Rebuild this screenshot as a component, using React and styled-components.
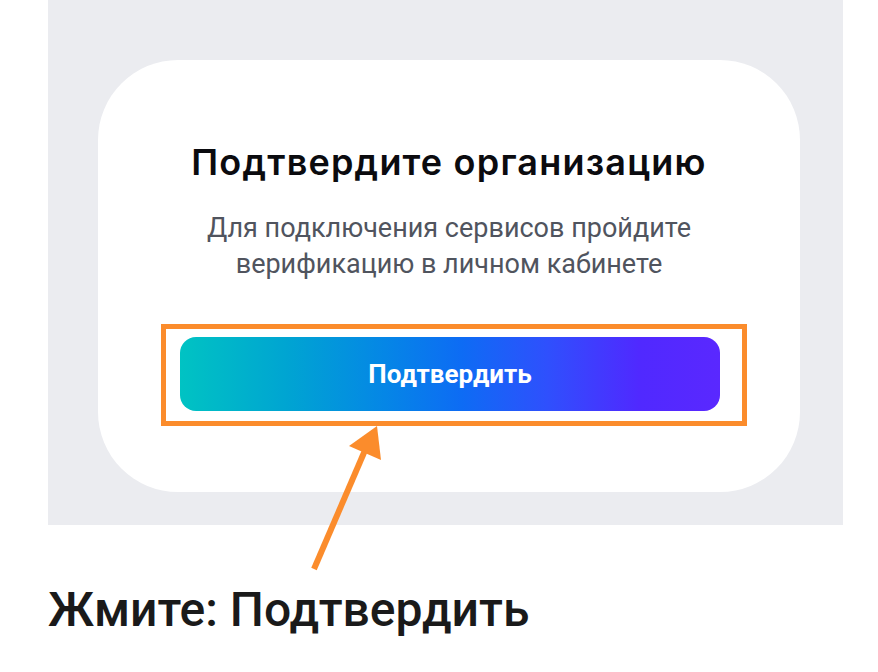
import React from 'react'
import styled, {createGlobalStyle} from 'styled-components'

const GlobalStyle = createGlobalStyle`
    body {
        margin: 0;
        background: #ffffff;
        font-family: Roboto, "Liberation Sans", sans-serif;
    }
`

const Page = styled.div`
    position: relative;
    width: 878px;
    height: 672px;
    padding-left: 48px;
    box-sizing: border-box;
    overflow: hidden;
`

const Panel = styled.div`
    width: 795px;
    height: 525px;
    background: #ebecf0;
    padding: 60px 0 0 50px;
    box-sizing: border-box;
`

const Card = styled.div`
    width: 702px;
    height: 432px;
    background: #ffffff;
    border-radius: 80px;
    display: flex;
    flex-direction: column;
    align-items: center;
    padding-top: 80px;
    box-sizing: border-box;
`

const Title = styled.h2`
    margin: 0;
    font-family: Inter, "Noto Sans", sans-serif;
    font-weight: 600;
    font-size: 36px;
    line-height: 44px;
    color: #0b0b0f;
    letter-spacing: 1.2px;
`

const Subtitle = styled.p`
    margin: 26px 0 0;
    font-family: Roboto, sans-serif;
    font-size: 27px;
    line-height: 36px;
    color: #50545e;
    text-align: center;
`

const Highlight = styled.div`
    margin-top: 42px;
    margin-left: 10px;
    border: 5px solid #fb8c2c;
    padding: 8px 22px 10px 14px;
`

const ConfirmButton = styled.button`
    width: 540px;
    height: 74px;
    border: none;
    border-radius: 16px;
    background: linear-gradient(90deg, #00c3c3 0%, #00a4d2 20%, #0586e6 38%, #0d6cf4 52%, #2f50fd 68%, #5029ff 85%, #5a28ff 100%);
    color: #ffffff;
    font-family: Roboto, sans-serif;
    font-weight: 700;
    font-size: 26px;
    display: flex;
    align-items: center;
    justify-content: center;
    cursor: pointer;
`

const Caption = styled.div`
    margin-top: 55px;
    font-family: Roboto, sans-serif;
    font-weight: 500;
    font-size: 48px;
    line-height: 60px;
    color: #1a1a1a;
`

const Arrow = styled.svg`
    position: absolute;
    left: 0;
    top: 0;
    pointer-events: none;
`

export default function App() {
    return (
        <Page>
            <GlobalStyle />
            <Panel>
                <Card>
                    <Title>Подтвердите организацию</Title>
                    <Subtitle>
                        Для подключения сервисов пройдите<br />
                        верификацию в личном кабинете
                    </Subtitle>
                    <Highlight>
                        <ConfirmButton>Подтвердить</ConfirmButton>
                    </Highlight>
                </Card>
            </Panel>
            <Caption>Жмите: Подтвердить</Caption>
            <Arrow width="878" height="672" viewBox="0 0 878 672">
                <line x1="314" y1="569" x2="366" y2="448" stroke="#fb8c2c" strokeWidth="6" />
                <polygon points="377,426 349,446 381,460" fill="#fb8c2c" />
            </Arrow>
        </Page>
    )
}
